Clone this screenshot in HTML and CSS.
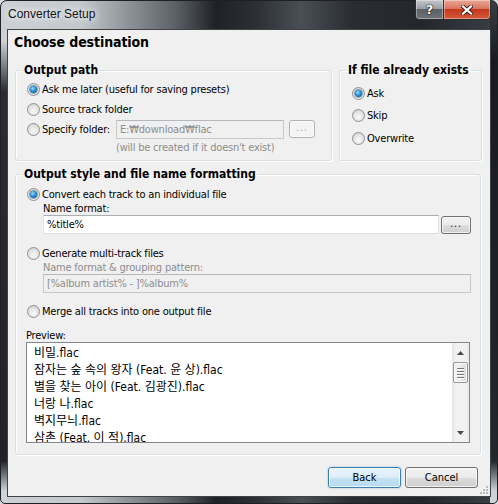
FILE: index.html
```html
<!DOCTYPE html>
<html lang="en">
<head>
  <meta charset="UTF-8">
  <title>Converter Setup</title>
  <link rel="stylesheet" href="styles.css">
</head>
<body>

<div class="window">
  <div class="titlebar">
    <span class="title">Converter Setup</span>
    <div class="caption">
      <span class="cap help">?</span>
      <span class="cap close">
        <svg width="12" height="10" viewBox="0 0 12 10">
          <path d="M2 1.5 L10 8.5 M10 1.5 L2 8.5" stroke="#3a1a12" stroke-width="4" stroke-linecap="square"/>
          <path d="M2 1.5 L10 8.5 M10 1.5 L2 8.5" stroke="#fff" stroke-width="2.3" stroke-linecap="square"/>
        </svg>
      </span>
    </div>
  </div>

  <div class="client">
    <h1>Choose destination</h1>

    <div class="top-row">
      <fieldset class="group path">
        <legend>Output path</legend>
        <div class="rows">
          <div class="radio on"><span class="dot"></span>Ask me later (useful for saving presets)</div>
          <div class="radio"><span class="dot"></span>Source track folder</div>
          <div class="radio">
            <span class="dot"></span><span class="folder-label">Specify folder:</span>
            <span class="field disabled folder">E:₩download₩flac</span>
            <span class="btn small disabled">...</span>
          </div>
          <div class="note">(will be created if it doesn't exist)</div>
        </div>
      </fieldset>

      <fieldset class="group exists">
        <legend>If file already exists</legend>
        <div class="rows tall">
          <div class="radio on"><span class="dot"></span>Ask</div>
          <div class="radio"><span class="dot"></span>Skip</div>
          <div class="radio"><span class="dot"></span>Overwrite</div>
        </div>
      </fieldset>
    </div>

    <fieldset class="group style">
      <legend>Output style and file name formatting</legend>
      <div class="rows">
        <div class="radio sm on"><span class="dot"></span>Convert each track to an individual file</div>
        <div class="sub">
          <div class="sub-label">Name format:</div>
          <div class="name-row">
            <span class="field">%title%</span>
            <span class="btn small">...</span>
          </div>
        </div>

        <div class="radio sm gen"><span class="dot"></span>Generate multi-track files</div>
        <div class="sub">
          <div class="sub-label grey">Name format &amp; grouping pattern:</div>
          <span class="field disabled wide">[%album artist% - ]%album%</span>
        </div>

        <div class="radio sm merge"><span class="dot"></span>Merge all tracks into one output file</div>
      </div>

      <div class="preview-label">Preview:</div>
      <div class="list">
        <div class="items">
          <div>비밀.flac</div>
          <div>잠자는 숲 속의 왕자 (Feat. 윤 상).flac</div>
          <div>별을 찾는 아이 (Feat. 김광진).flac</div>
          <div>너랑 나.flac</div>
          <div>벽지무늬.flac</div>
          <div>삼촌 (Feat. 이 적).flac</div>
        </div>
        <div class="scroll">
          <svg class="arrow" width="7" height="4" viewBox="0 0 7 4"><path d="M0 4 L3.5 0 L7 4 Z" fill="#4a4a4a"/></svg>
          <div class="thumb"><span></span><span></span><span></span><span></span></div>
          <div class="track"></div>
          <svg class="arrow" width="7" height="4" viewBox="0 0 7 4"><path d="M0 0 L7 0 L3.5 4 Z" fill="#4a4a4a"/></svg>
        </div>
      </div>
    </fieldset>

    <div class="actions">
      <span class="btn big default">Back</span>
      <span class="btn big">Cancel</span>
    </div>

    <svg class="grip" width="10" height="10" viewBox="0 0 10 10">
      <g fill="#b8bcc0">
        <rect x="7" y="1" width="2" height="2"/>
        <rect x="4" y="4" width="2" height="2"/><rect x="7" y="4" width="2" height="2"/>
        <rect x="1" y="7" width="2" height="2"/><rect x="4" y="7" width="2" height="2"/><rect x="7" y="7" width="2" height="2"/>
      </g>
    </svg>
  </div>
</div>

</body>
</html>
```

FILE: styles.css
```css
* {
  box-sizing: border-box;
}

html, body {
  margin: 0;
}

body {
  width: 498px;
  height: 504px;
  overflow: hidden;
  background: #d9dcdf;
  font-family: "DejaVu Sans Condensed", "DejaVu Sans", "Noto Sans CJK KR", sans-serif;
  font-size: 11px;
  letter-spacing: -0.2px;
  color: #000;
}

.window {
  width: 498px;
  height: 504px;
  display: flex;
  flex-direction: column;
  padding: 0 6px 6px;
  border: 1px solid #1d2024;
  border-radius: 7px 7px 5px 5px;
  background:
    linear-gradient(180deg, transparent 0, transparent 40px, rgba(14,16,19,0.85) 90px, rgba(14,16,19,0.9) 460px, #cfd3d7 490px) left top / 7px 100% no-repeat,
    linear-gradient(180deg, transparent 0, rgba(20,22,26,0.9) 60px, #24272b 460px, #cfd3d7 490px) right top / 7px 100% no-repeat,
    linear-gradient(90deg, #cdd1d5 0, #c3c8cc 80px, #8b9096 130px, #5b6066 175px, #1e2226 215px, #2c3035 255px, #4a4f55 300px, #2a2e33 350px, #23272c 420px, #3b4046 498px);
}

/* title bar */
.titlebar {
  height: 28px;
  display: flex;
  align-items: flex-start;
}

.title {
  padding: 6px 0 0 1px;
  font-family: "Liberation Sans", sans-serif;
  font-size: 12px;
  line-height: 15px;
  letter-spacing: 0;
  color: #111;
  text-shadow: 0 0 6px #fff, 0 0 10px rgba(255,255,255,0.8);
}

.caption {
  margin-left: auto;
  margin-top: -1px;
  display: flex;
}

.cap {
  height: 20px;
  display: flex;
  align-items: center;
  justify-content: center;
  border: 1px solid #2b2f34;
  border-top: none;
  box-shadow: inset 0 0 0 1px rgba(255,255,255,0.35);
}

.help {
  width: 28px;
  border-radius: 0 0 0 4px;
  border-right: none;
  background: linear-gradient(180deg, #c4c8cc 0, #9ba0a5 45%, #5c6167 50%, #6e7379 100%);
  color: #fff;
  font-family: "DejaVu Sans", sans-serif;
  font-weight: bold;
  font-size: 13px;
  text-shadow: 0 0 2px #000, 0 0 1px #000;
}

.close {
  width: 48px;
  border-radius: 0 0 4px 0;
  background: linear-gradient(180deg, #e9a898 0, #d9765f 45%, #c4391d 50%, #d45a3a 100%);
}

/* client area */
.client {
  flex: 1;
  position: relative;
  display: flex;
  flex-direction: column;
  background: #f0f0f0;
  border: 1px solid #3e4348;
}

h1 {
  margin: 4px 0 0 6px;
  font-size: 14px;
  line-height: 16px;
  font-weight: bold;
  letter-spacing: -0.1px;
}

.top-row {
  display: flex;
  gap: 7px;
  margin: 13px 8px 0 7px;
}

.group {
  margin: 0;
  min-width: 0;
  padding: 0 6px;
  border: 1px solid #d5dfe5;
  border-radius: 3px;
  box-shadow: inset 1px 1px 0 #fff, 1px 1px 0 #fff;
}

.group legend {
  padding: 0 2px;
  font-size: 12px;
  line-height: 14px;
  font-weight: bold;
  letter-spacing: 0;
}

.path {
  width: 317px;
  padding-bottom: 5px;
}

.exists {
  flex: 1;
}

.rows {
  padding: 2px 0 0 5px;
}

.rows.tall {
  padding: 5px 0 0 6px;
}

.rows.tall .radio {
  height: 22.5px;
}

.radio {
  display: flex;
  align-items: center;
  height: 20px;
  white-space: nowrap;
}

.radio.sm {
  height: 16px;
}

.dot {
  flex: none;
  position: relative;
  width: 13px;
  height: 13px;
  margin-right: 2px;
  border: 1px solid #8f9092;
  border-radius: 50%;
  background: radial-gradient(circle at 50% 65%, #fbfbfb 0, #e6e6e6 45%, #cdcdcd 100%);
}

.radio.on .dot::after {
  content: "";
  position: absolute;
  left: 2px;
  top: 2px;
  width: 7px;
  height: 7px;
  border-radius: 50%;
  background: radial-gradient(circle at 40% 35%, #9bdcfa 0, #2a8fd6 45%, #0f4f86 100%);
  box-shadow: 0 0 0 0.5px #164b76;
}

.folder-label {
  width: 74px;
}

.field {
  display: flex;
  align-items: center;
  height: 19px;
  padding: 0 3px;
  background: #fff;
  border: 1px solid #dbdfe6;
  border-top-color: #abadb3;
  border-left-color: #e2e3ea;
  border-right-color: #e2e3ea;
  white-space: nowrap;
}

.field.disabled {
  background: #f0f0f0;
  color: #8d8d8d;
  border-color: #c7cacd;
  border-top-color: #b5b8bb;
}

.field.folder {
  width: 168px;
}

.field.wide {
  width: 100%;
}

.note {
  margin: 2px 0 0 89px;
  line-height: 14px;
  color: #8d8d8d;
}

/* buttons */
.btn {
  display: flex;
  align-items: center;
  justify-content: center;
  border: 1px solid #707070;
  border-radius: 3px;
  background: linear-gradient(180deg, #f2f2f2 0, #ebebeb 50%, #dddddd 51%, #cfcfcf 100%);
  box-shadow: inset 0 0 0 1px rgba(255,255,255,0.7);
  letter-spacing: 0;
}

.btn.small {
  width: 30px;
  height: 18px;
  margin-left: 2px;
  font-size: 10px;
  letter-spacing: 1px;
  line-height: 10px;
  padding-bottom: 2px;
}

.btn.small.disabled {
  width: 26px;
  margin-left: 5px;
  border-color: #adb2b5;
  background: #f4f4f4;
  color: #a0a0a0;
}

.btn.big {
  width: 73px;
  height: 21px;
}

.btn.default {
  border-color: #3c7fb1;
  background: linear-gradient(180deg, #eaf5fc 0, #dcedf8 50%, #c6e2f4 51%, #b5d9f0 100%);
  box-shadow: inset 0 0 0 1px rgba(255,255,255,0.8), 0 0 2px rgba(60,127,177,0.5);
}

/* output style group */
.style {
  margin: 6px 9px 0 7px;
  padding: 0 9px 11px 6px;
}

.style .rows {
  padding-top: 5px;
}

.sub {
  margin-left: 16px;
}

.sub-label {
  line-height: 13px;
}

.grey {
  color: #8d8d8d;
}

.name-row {
  display: flex;
  align-items: center;
}

.name-row .field {
  flex: 1;
}

.gen {
  margin-top: 11px;
}

.merge {
  margin-top: 10px;
}

.preview-label {
  margin: 11px 0 0 4px;
  line-height: 12px;
}

.list {
  display: flex;
  height: 101px;
  margin: 0 1px 0 4px;
  background: #fff;
  border: 1px solid #828790;
}

.items {
  flex: 1;
  overflow: hidden;
  padding: 2px 0 0 7px;
  font-size: 12px;
  line-height: 17px;
  letter-spacing: 0;
  white-space: nowrap;
}

.scroll {
  width: 17px;
  display: flex;
  flex-direction: column;
  align-items: center;
  background: linear-gradient(90deg, #e3e3e3 0, #f2f2f2 20%, #f2f2f2 80%, #e8e8e8 100%);
}

.arrow {
  margin: 8px 0 7px;
}

.arrow:last-child {
  margin: 0 0 7px;
}

.thumb {
  width: 15px;
  height: 21px;
  display: flex;
  flex-direction: column;
  align-items: center;
  justify-content: center;
  gap: 2px;
  border: 1px solid #959595;
  border-radius: 2px;
  background: linear-gradient(90deg, #f2f2f2 0, #ececec 50%, #d8d8d8 100%);
  box-shadow: inset 0 0 0 1px rgba(255,255,255,0.8);
}

.thumb span {
  width: 7px;
  height: 1px;
  background: #777;
  box-shadow: 0 1px 0 #fff;
}

.track {
  flex: 1;
}

.actions {
  display: flex;
  justify-content: flex-end;
  gap: 4px;
  margin: 12px 12px 0 0;
}

.grip {
  position: absolute;
  right: 1px;
  bottom: 1px;
}
```
